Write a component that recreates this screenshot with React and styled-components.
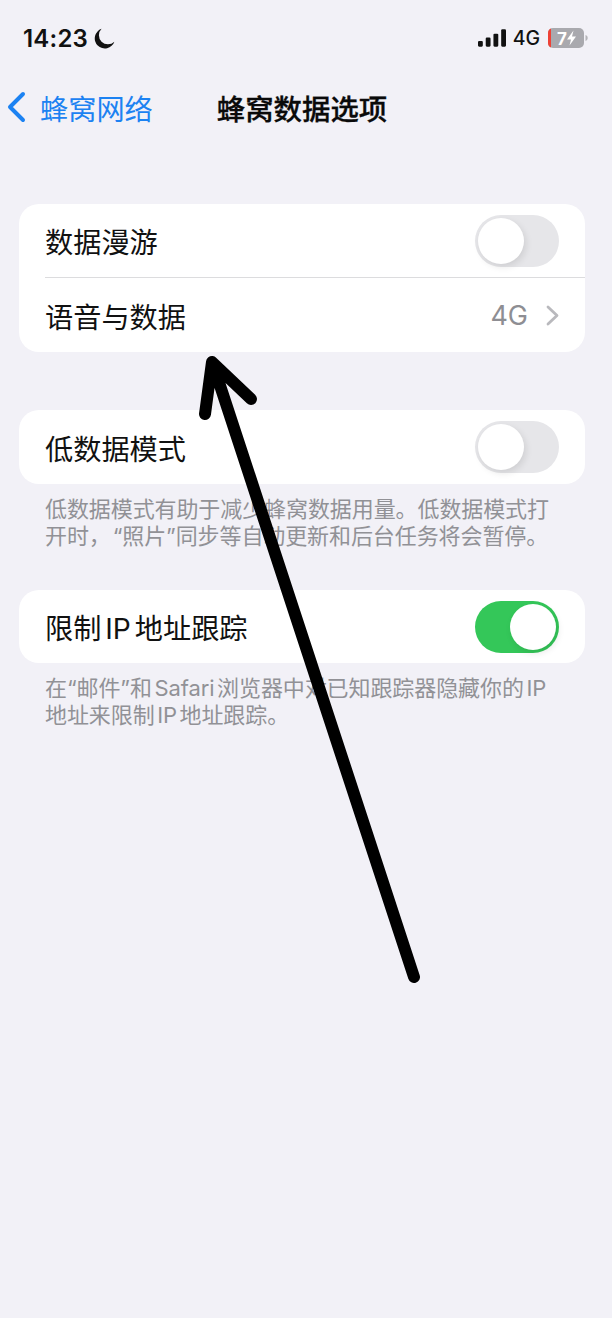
import React from "react";
import styled, { createGlobalStyle } from "styled-components";

const GlobalStyle = createGlobalStyle`
  html, body {
    margin: 0;
    padding: 0;
    background: #f2f1f7;
  }
  * {
    box-sizing: border-box;
  }
`;

const Page = styled.div`
  position: relative;
  width: 612px;
  height: 1318px;
  overflow: hidden;
  background: #f2f1f7;
  font-family: Inter, "Noto Sans CJK SC", sans-serif;
  color: #000;
`;

const StatusBar = styled.div`
  display: flex;
  justify-content: space-between;
  align-items: center;
  height: 74px;
  padding: 2px 24px 0 23px;
`;

const TimeGroup = styled.div`
  display: flex;
  align-items: center;
  gap: 6px;
`;

const Time = styled.span`
  font-size: 24px;
  font-weight: 600;
  letter-spacing: 0.2px;
  color: #111;
`;

const StatusIcons = styled.div`
  display: flex;
  align-items: center;
`;

const NetworkLabel = styled.span`
  margin: 0 8px 0 7px;
  font-size: 19.5px;
  font-weight: 500;
  color: #111;
`;

const NavBar = styled.div`
  position: relative;
  display: flex;
  justify-content: center;
  align-items: center;
  height: 66px;
  padding-right: 8px;
`;

const BackLink = styled.div`
  position: absolute;
  left: 6px;
  top: 0;
  height: 66px;
  display: flex;
  align-items: center;
  gap: 14px;
  font-size: 28.2px;
  color: #1c82f2;
`;

const Title = styled.h1`
  margin: 0;
  font-size: 28.4px;
  font-weight: 500;
  color: #0a0a0a;
  -webkit-text-stroke: 0.3px #0a0a0a;
`;

const Content = styled.div`
  display: flex;
  flex-direction: column;
  padding: 64px 27px 0 19px;
`;

const Card = styled.div`
  margin-top: ${(p) => p.$top || 0}px;
  background: #fff;
  border-radius: 20px;
`;

const Row = styled.div`
  display: flex;
  justify-content: space-between;
  align-items: center;
  height: ${(p) => p.$height || 74}px;
  padding: 0 26px;
`;

const RowLabel = styled.span`
  font-size: 28.2px;
  word-spacing: -4px;
  color: #111;
`;

const Divider = styled.div`
  height: 1px;
  margin-left: 26px;
  background: #dcdcde;
`;

const RowValue = styled.div`
  display: flex;
  align-items: center;
  gap: 18px;
  font-size: 27px;
  color: #8e8e93;
`;

const Footnote = styled.p`
  margin: 12px 0 0;
  padding: 0 20px 0 26px;
  font-size: 22px;
  line-height: 27px;
  letter-spacing: -0.09px;
  word-spacing: -3.5px;
  color: #919196;
`;

const Track = styled.div`
  position: relative;
  width: 84px;
  height: 52px;
  border-radius: 26px;
  background: ${(p) => (p.$on ? "#34c759" : "#e6e6e9")};
`;

const Knob = styled.div`
  position: absolute;
  top: 3px;
  left: ${(p) => (p.$on ? "35px" : "3px")};
  width: 46px;
  height: 46px;
  border-radius: 50%;
  background: #fff;
  box-shadow: 2px 3px 7px rgba(0, 0, 0, 0.1);
`;

const ArrowOverlay = styled.svg`
  position: absolute;
  left: 0;
  top: 0;
  pointer-events: none;
`;

const Toggle = ({ on }) => (
  <Track $on={on}>
    <Knob $on={on} />
  </Track>
);

const Moon = () => (
  <svg width="21" height="21" viewBox="0 0 20 20">
    <path d="M7.2 0.8A9.6 9.6 0 1 0 19.4 13 8.6 8.6 0 0 1 7.2 0.8Z" fill="#111" />
  </svg>
);

const Signal = () => (
  <svg width="28" height="18" viewBox="0 0 29 18">
    <rect x="0" y="12" width="5" height="6" rx="1.2" fill="#111" />
    <rect x="8" y="8.5" width="5" height="9.5" rx="1.2" fill="#111" />
    <rect x="16" y="4.5" width="5" height="13.5" rx="1.2" fill="#111" />
    <rect x="24" y="0" width="5" height="18" rx="1.2" fill="#111" />
  </svg>
);

const Battery = () => (
  <svg width="40" height="20" viewBox="0 0 40 20">
    <rect x="0" y="0" width="36" height="20" rx="5" fill="#a9a9ae" />
    <path d="M0 5a5 5 0 0 1 3-4.6V19.6A5 5 0 0 1 0 15Z" fill="#ef4136" />
    <path d="M37.5 7c1.4.4 2.2 1.6 2.2 3s-.8 2.6-2.2 3Z" fill="#b4b4b8" />
    <text x="9" y="16.5" fontFamily="Inter, sans-serif" fontSize="17" fontWeight="700" fill="#fff">7</text>
    <path d="M25.5 2.5 19 11.5h4l-1.5 6 6.5-9h-4Z" fill="#fff" />
  </svg>
);

const BackChevron = () => (
  <svg width="20" height="32" viewBox="0 0 20 32">
    <path d="M17 3 4 16l13 13" fill="none" stroke="#1c82f2" strokeWidth="4" strokeLinecap="round" strokeLinejoin="round" />
  </svg>
);

const RowChevron = () => (
  <svg width="13" height="21" viewBox="0 0 13 21">
    <path d="M2 2l9 8.5L2 19" fill="none" stroke="#b9b9bd" strokeWidth="2.8" strokeLinecap="round" strokeLinejoin="round" />
  </svg>
);

const App = () => (
  <Page>
    <GlobalStyle />
    <StatusBar>
      <TimeGroup>
        <Time>14:23</Time>
        <Moon />
      </TimeGroup>
      <StatusIcons>
        <Signal />
        <NetworkLabel>4G</NetworkLabel>
        <Battery />
      </StatusIcons>
    </StatusBar>
    <NavBar>
      <BackLink>
        <BackChevron />
        蜂窝网络
      </BackLink>
      <Title>蜂窝数据选项</Title>
    </NavBar>
    <Content>
      <Card>
        <Row $height={73}>
          <RowLabel>数据漫游</RowLabel>
          <Toggle />
        </Row>
        <Divider />
        <Row>
          <RowLabel>语音与数据</RowLabel>
          <RowValue>
            4G
            <RowChevron />
          </RowValue>
        </Row>
      </Card>
      <Card $top={58}>
        <Row>
          <RowLabel>低数据模式</RowLabel>
          <Toggle />
        </Row>
      </Card>
      <Footnote>
        {"低数据模式有助于减少蜂窝数据用量。低数据模式打开时，\u200A“照片”同步等自动更新和后台任务将会暂停。"}
      </Footnote>
      <Card $top={40}>
        <Row $height={73}>
          <RowLabel>限制 IP 地址跟踪</RowLabel>
          <Toggle on />
        </Row>
      </Card>
      <Footnote>
        在“邮件”和 Safari 浏览器中对已知跟踪器隐藏你的 IP 地址来限制 IP 地址跟踪。
      </Footnote>
    </Content>
    <ArrowOverlay width="612" height="1318" viewBox="0 0 612 1318">
      <path
        d="M414 977 213 364M205 414 212 362 251 399"
        fill="none"
        stroke="#000"
        strokeWidth="12"
        strokeLinecap="round"
        strokeLinejoin="round"
      />
    </ArrowOverlay>
  </Page>
);

export default App;
